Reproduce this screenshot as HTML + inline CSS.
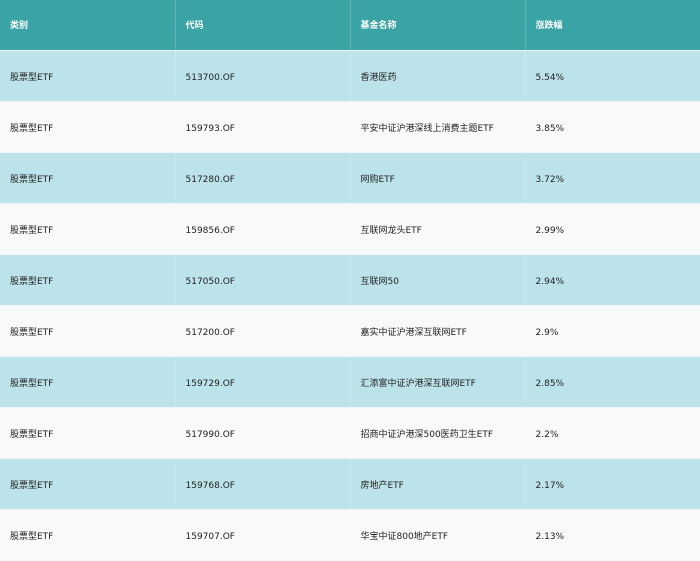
<!DOCTYPE html>
<html><head><meta charset="utf-8"><style>
body{margin:0;width:700px;height:560px;overflow:hidden;background:#f7f9fb;font-family:"DejaVu Sans","Noto Sans CJK SC",sans-serif;font-size:9px;color:#222}
table{border-collapse:collapse;width:700px;table-layout:fixed}
td,th{padding:3px 0 0 10px;text-align:left;border-right:1px solid rgba(255,255,255,.2);border-bottom:1px solid #f0f4f6;height:47px;font-weight:normal;vertical-align:middle;line-height:12px}
th{padding-top:2px;height:48px}
td div,th div{height:12px;line-height:12px;overflow:visible;white-space:nowrap}
th{background:#3aa3a6;color:#fff;font-weight:bold}
tr:nth-child(odd) td{background:#bce3e9}
tr:nth-child(even) td{background:#f7f9fb}
col{width:175px}
</style></head><body>
<table><colgroup><col><col><col><col></colgroup>
<thead><tr><th><div>类别</div></th><th><div>代码</div></th><th><div>基金名称</div></th><th><div>涨跌幅</div></th></tr></thead>
<tbody>
<tr><td><div>股票型ETF</div></td><td><div>513700.OF</div></td><td><div>香港医药</div></td><td><div>5.54%</div></td></tr>
<tr><td><div>股票型ETF</div></td><td><div>159793.OF</div></td><td><div>平安中证沪港深线上消费主题ETF</div></td><td><div>3.85%</div></td></tr>
<tr><td><div>股票型ETF</div></td><td><div>517280.OF</div></td><td><div>网购ETF</div></td><td><div>3.72%</div></td></tr>
<tr><td><div>股票型ETF</div></td><td><div>159856.OF</div></td><td><div>互联网龙头ETF</div></td><td><div>2.99%</div></td></tr>
<tr><td><div>股票型ETF</div></td><td><div>517050.OF</div></td><td><div>互联网50</div></td><td><div>2.94%</div></td></tr>
<tr><td><div>股票型ETF</div></td><td><div>517200.OF</div></td><td><div>嘉实中证沪港深互联网ETF</div></td><td><div>2.9%</div></td></tr>
<tr><td><div>股票型ETF</div></td><td><div>159729.OF</div></td><td><div>汇添富中证沪港深互联网ETF</div></td><td><div>2.85%</div></td></tr>
<tr><td><div>股票型ETF</div></td><td><div>517990.OF</div></td><td><div>招商中证沪港深500医药卫生ETF</div></td><td><div>2.2%</div></td></tr>
<tr><td><div>股票型ETF</div></td><td><div>159768.OF</div></td><td><div>房地产ETF</div></td><td><div>2.17%</div></td></tr>
<tr><td><div>股票型ETF</div></td><td><div>159707.OF</div></td><td><div>华宝中证800地产ETF</div></td><td><div>2.13%</div></td></tr>
</tbody></table>
</body></html>
